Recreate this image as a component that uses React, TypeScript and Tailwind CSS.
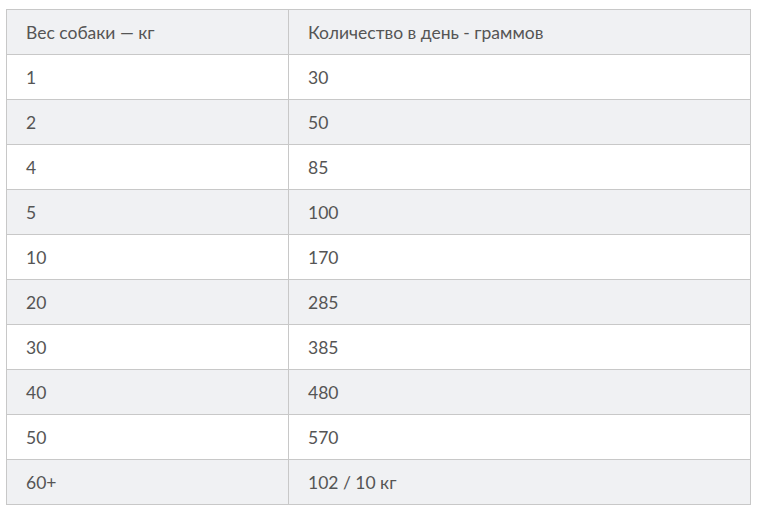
import React from 'react';

const rows: [string, string][] = [
  ['1', '30'],
  ['2', '50'],
  ['4', '85'],
  ['5', '100'],
  ['10', '170'],
  ['20', '285'],
  ['30', '385'],
  ['40', '480'],
  ['50', '570'],
  ['60+', '102 / 10 кг'],
];

const App: React.FC = () => {
  return (
    <div className="min-h-screen bg-white pt-[9px] pl-[6px] font-['Lato',sans-serif] text-[17.5px] text-[#555]">
      <div className="w-[745px] border-t border-l border-r border-[#c8c8c8]">
        <div className="flex h-[45px] items-center border-b border-[#c8c8c8] bg-[#f0f1f3]">
          <div className="flex h-full w-[282px] items-center border-r border-[#c8c8c8] pl-[19px] pt-[2px]">Вес собаки — кг</div>
          <div className="flex-1 pl-[19px] pt-[2px]">Количество в день - граммов</div>
        </div>
        {rows.map(([weight, amount], index) => (
          <div
            key={weight}
            className={`flex h-[45px] items-center border-b border-[#c8c8c8] ${index % 2 === 1 ? 'bg-[#f0f1f3]' : 'bg-white'}`}
          >
            <div className="flex h-full w-[282px] items-center border-r border-[#c8c8c8] pl-[19px] pt-[2px]">{weight}</div>
            <div className="flex-1 pl-[19px] pt-[2px]">{amount}</div>
          </div>
        ))}
      </div>
    </div>
  );
};

export default App;
